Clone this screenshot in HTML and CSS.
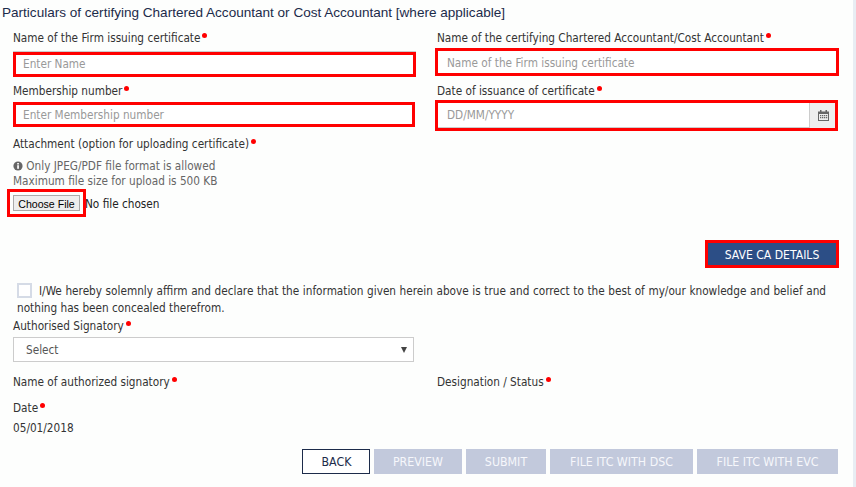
FILE: index.html
```html
<!DOCTYPE html>
<html lang="en">
<head>
<meta charset="utf-8">
<title>Particulars of certifying Chartered Accountant</title>
<link rel="stylesheet" href="styles.css">
</head>
<body>
<main class="page">
  <h1 class="title">Particulars of certifying Chartered Accountant or Cost Accountant [where applicable]</h1>
  <div class="form">
    <div class="row row-one">
      <div class="cell">
        <label class="label">Name of the Firm issuing certificate<span class="req"></span></label>
        <input class="input input-left-a" type="text" placeholder="Enter Name">
      </div>
      <div class="cell">
        <label class="label">Name of the certifying Chartered Accountant/Cost Accountant<span class="req"></span></label>
        <input class="input input-right-a" type="text" placeholder="Name of the Firm issuing certificate">
      </div>
    </div>
    <div class="row row-two">
      <div class="cell">
        <label class="label">Membership number<span class="req"></span></label>
        <input class="input input-left-b" type="text" placeholder="Enter Membership number">
      </div>
      <div class="cell">
        <label class="label">Date of issuance of certificate<span class="req"></span></label>
        <div class="date-group">
          <input class="date-input" type="text" placeholder="DD/MM/YYYY">
          <span class="date-addon">
            <svg class="cal" viewBox="0 0 11 11" width="11" height="11" aria-hidden="true">
              <path fill="#666" d="M2 0h1.5v1.5h4V0H9v1.5h2V11H0V1.5h2zM1 4v6h9V4z"/>
              <path fill="#666" d="M2 5h1.3v1.2H2zM4 5h1.3v1.2H4zM6 5h1.3v1.2H6zM8 5h1.2v1.2H8zM2 7.1h1.3v1.2H2zM4 7.1h1.3v1.2H4zM6 7.1h1.3v1.2H6zM8 7.1h1.2v1.2H8z"/>
            </svg>
          </span>
        </div>
      </div>
    </div>
    <label class="label attach-label">Attachment (option for uploading certificate)<span class="req"></span></label>
    <p class="hint"><svg class="info" viewBox="0 0 10 10" width="10" height="10" aria-hidden="true"><circle cx="5" cy="5" r="4.6" fill="#666"/><rect x="4.2" y="4.2" width="1.7" height="3.6" fill="#fff"/><rect x="4.2" y="2" width="1.7" height="1.5" fill="#fff"/></svg> Only JPEG/PDF file format is allowed<br>Maximum file size for upload is 500 KB</p>
    <div class="file-row">
      <button class="file-btn" type="button">Choose File</button>
      <span class="file-name">No file chosen</span>
    </div>
    <div class="save-row"><button class="save-btn" type="button">SAVE CA DETAILS</button></div>
    <div class="declare">
      <span class="checkbox"></span>I/We hereby solemnly affirm and declare that the information given herein above is true and correct to the best of my/our knowledge and belief and nothing has been concealed therefrom.
    </div>
    <label class="label sign-label">Authorised Signatory<span class="req"></span></label>
    <div class="select"><span>Select</span><span class="caret"></span></div>
    <div class="row row-names">
      <div class="label">Name of authorized signatory<span class="req"></span></div>
      <div class="label">Designation / Status<span class="req"></span></div>
    </div>
    <div class="label date-label">Date<span class="req"></span></div>
    <div class="date-value">05/01/2018</div>
    <div class="actions">
      <button class="btn btn-back" type="button">BACK</button>
      <button class="btn btn-off btn-preview" type="button">PREVIEW</button>
      <button class="btn btn-off btn-submit" type="button">SUBMIT</button>
      <button class="btn btn-off btn-dsc" type="button">FILE ITC WITH DSC</button>
      <button class="btn btn-off btn-evc" type="button">FILE ITC WITH EVC</button>
    </div>
  </div>
</main>
</body>
</html>
```
FILE: styles.css
```css
* { box-sizing: border-box; }
html, body { margin: 0; padding: 0; }
body {
  width: 856px;
  height: 487px;
  overflow: hidden;
  background: #fdfefd;
  border-right: 3px solid #e8edf3;
  font-family: "DejaVu Sans Condensed", "DejaVu Sans", sans-serif;
  font-size: 11.7px;
  color: #333;
}
.page { width: 853px; }
.title {
  margin: 0;
  padding: 4px 0 0 2px;
  height: 30px;
  font: 400 13.55px/18px "Liberation Sans", Arial, sans-serif;
  color: #1c2b4a;
}
.form { padding: 0 14px 0 13px; }
.row { display: grid; grid-template-columns: 403px 403px; column-gap: 21px; }
.cell { display: flex; flex-direction: column; }
.label { display: block; height: 17px; line-height: 17px; color: #333; white-space: nowrap; }
.req {
  display: inline-block;
  width: 5px;
  height: 5px;
  margin: 0 0 4px 2px;
  border-radius: 50%;
  background: #f00;
}
.input, .date-input {
  font: inherit;
  color: #333;
  background: #fff;
  outline: none;
}
.input::placeholder, .date-input::placeholder { color: #999; opacity: 1; }
.input { display: block; border: 3px solid #f00; padding: 0 7px; }
.row-one { height: 46px; }
.input-left-a { width: 403px; height: 25px; margin-top: 5px; padding-bottom: 2px; box-shadow: 0 -1px 0 #ccc; }
.input-right-a { width: 404px; height: 28px; margin: 1px 0 0 -2px; padding: 2px 9px 0; }
.row-two { height: 48px; margin-top: 7px; }
.input-left-b { width: 402px; height: 25px; margin-top: 2px; }
.date-group {
  display: flex;
  width: 403px;
  height: 31px;
  margin-left: -2px;
  border: 3px solid #f00;
}
.date-input { flex: 1; min-width: 0; border: 0; border-bottom: 1px solid #ccc; padding: 0 9px; }
.date-addon {
  width: 26px;
  display: flex;
  align-items: center;
  justify-content: center;
  padding: 0 0 1px 2px;
  background: #eee;
  border-left: 1px solid #ccc;
}
.attach-label { margin-top: 5px; }
.hint { margin: 6px 0 0; line-height: 15px; color: #666; }
.info { vertical-align: -1px; }
.file-row { display: flex; align-items: center; height: 16px; margin-top: 6px; }
.file-btn {
  width: 67px;
  height: 16px;
  padding: 1px 0 0;
  font: 10.6px "Liberation Sans", Arial, sans-serif;
  color: #000;
  background: #eee;
  border: 1px solid #aaa;
  outline: 3px solid #f00;
  outline-offset: 3px;
}
.file-name { margin-left: 5px; padding-top: 1px; color: #222; }
.save-row { display: flex; justify-content: flex-end; margin-top: 32px; padding-right: 3px; }
.save-btn {
  width: 128px;
  height: 22px;
  padding: 1px 0 0;
  font-size: 12.1px;
  font-family: inherit;
  color: #fff;
  background: #2c4e86;
  border: 0;
  outline: 3px solid #f00;
  outline-offset: 0;
}
.declare {
  margin: 18px 0 0 4px;
  width: 809px;
  line-height: 17px;
  text-align: justify;
  height: 34px;
}
.checkbox {
  display: inline-block;
  width: 15px;
  height: 15px;
  margin-right: 7px;
  vertical-align: -3px;
  background: #fff;
  border: 2px solid #d5dbe6;
}
.sign-label { margin-top: 1px; }
.select {
  display: flex;
  align-items: center;
  justify-content: space-between;
  width: 401px;
  height: 25px;
  margin-top: 2px;
  padding: 0 6px 0 12px;
  border: 1px solid #ccc;
  background: #fff;
  color: #555;
}
.caret {
  width: 0;
  height: 0;
  border-left: 3px solid transparent;
  border-right: 3px solid transparent;
  border-top: 6px solid #444;
}
.row-names { margin-top: 12px; height: 17px; }
.date-label { margin-top: 9px; }
.date-value { margin-top: 3px; height: 17px; line-height: 17px; }
.actions { display: flex; gap: 4px; justify-content: flex-end; margin-top: 12px; padding-right: 1px; }
.btn {
  height: 25px;
  padding: 0;
  font-family: inherit;
  font-size: 12.3px;
  border: 0;
}
.btn-back { width: 68px; padding-left: 1px; color: #1c2b4a; background: #fff; border: 1px solid #1c2b4a; }
.btn-off { color: #f6f7fb; background: #c2c9dc; }
.btn-preview { width: 88px; }
.btn-submit { width: 80px; }
.btn-dsc { width: 143px; }
.btn-evc { width: 141px; }
```
